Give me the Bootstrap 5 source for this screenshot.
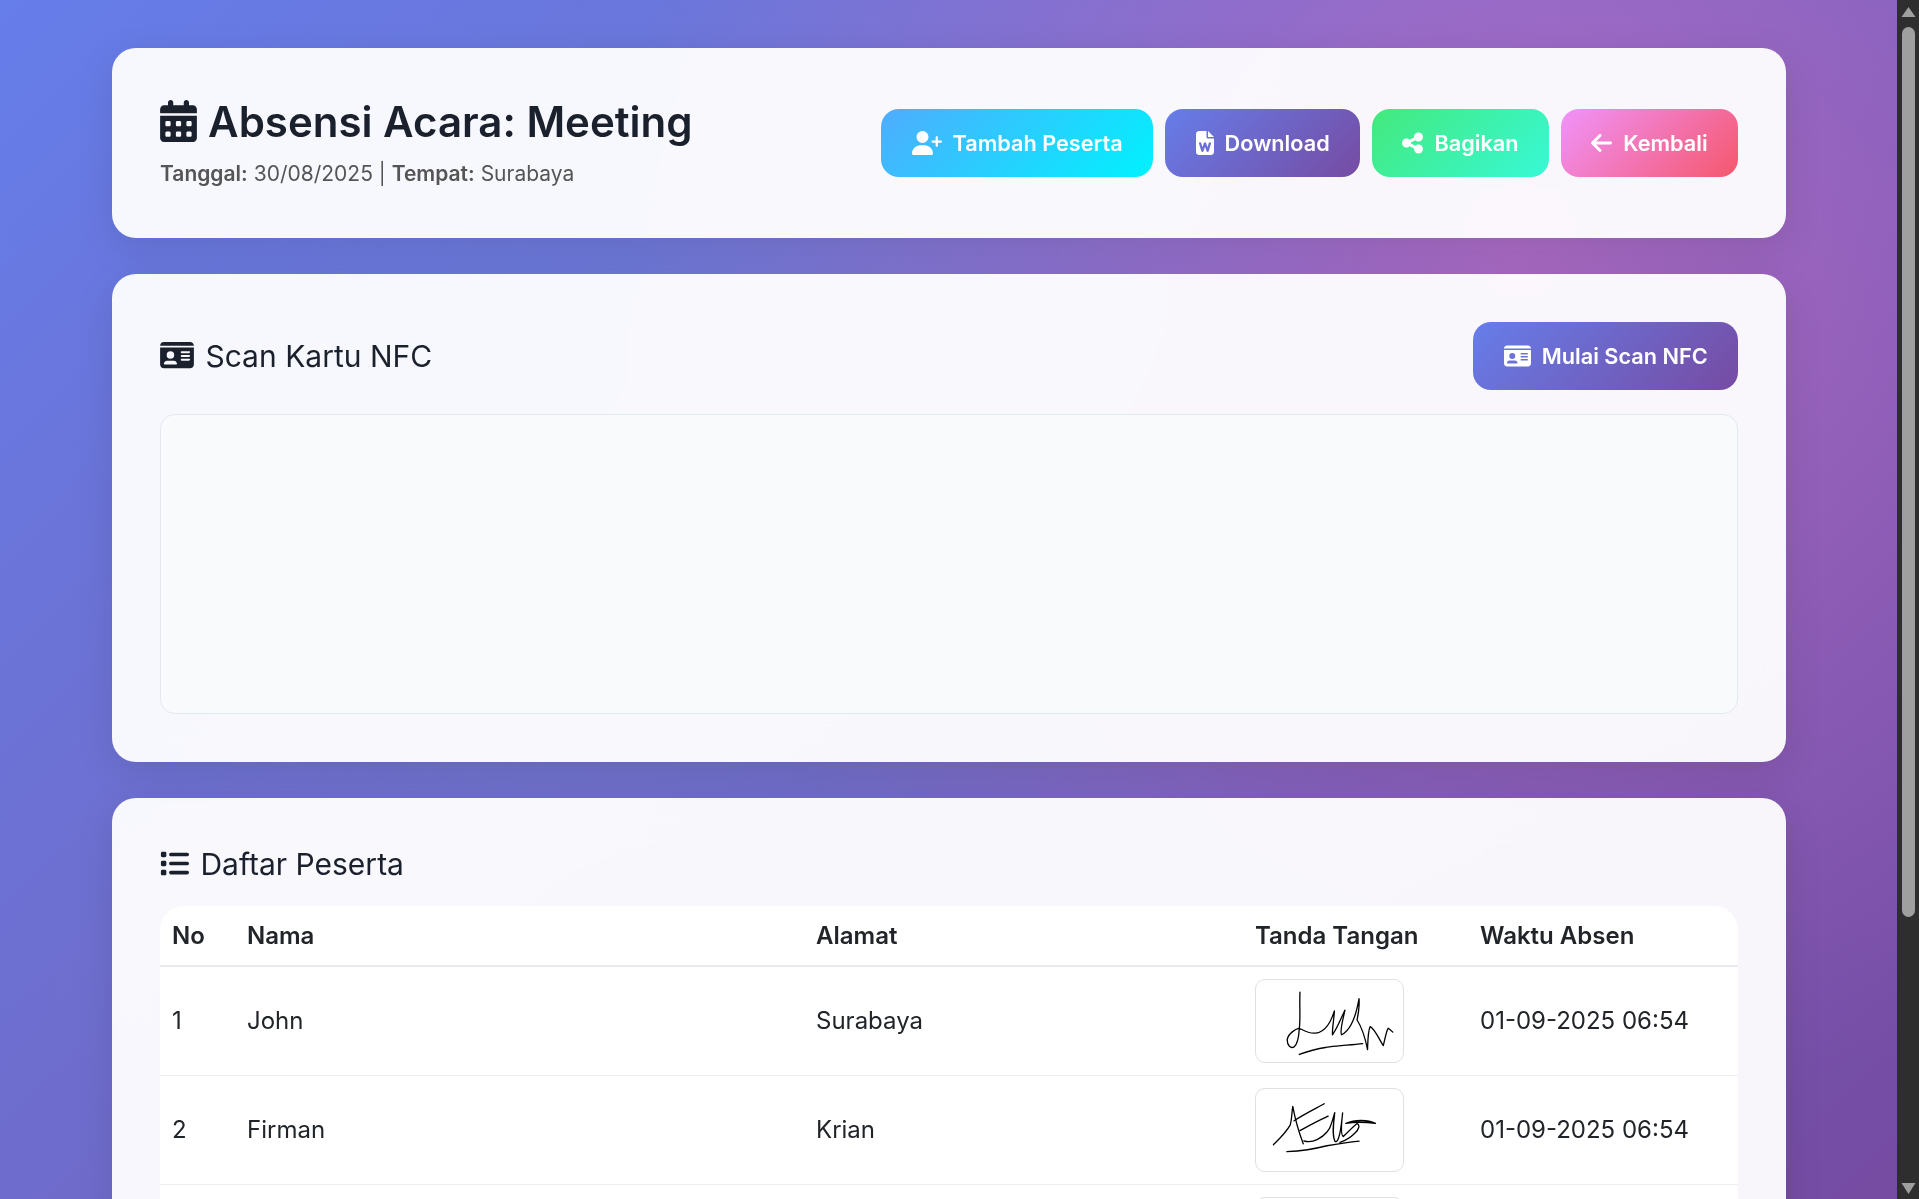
<!DOCTYPE html>
<html lang="id"><head><meta charset="utf-8"><title>Absensi Acara</title>
<link href="https://cdn.jsdelivr.net/npm/bootstrap@5.3.0/dist/css/bootstrap.min.css" rel="stylesheet">
<style>
html,body{height:100%;margin:0;overflow:hidden}
body{font-family:Inter,"Liberation Sans",sans-serif;color:#212529}
.app-shell{height:1199px}
.scroll-view{position:relative;flex:1 1 auto;min-width:0;overflow:hidden;background:linear-gradient(135deg,#667eea 0%,#764ba2 100%)}
.scroll-view::before{content:"";position:absolute;inset:0;background:radial-gradient(circle at 20% 80%,rgba(120,119,198,.3) 0%,transparent 50%),radial-gradient(circle at 80% 20%,rgba(255,119,198,.4) 0%,transparent 50%),radial-gradient(circle at 40% 40%,rgba(120,219,255,.12) 0%,transparent 50%)}
.page-wrap{position:relative;padding:48px 111px 0 112px}
.glass{background:rgba(255,255,255,.95);backdrop-filter:blur(20px);border-radius:24px;padding:48px;margin-bottom:36px;box-shadow:0 10px 38px rgba(0,0,0,.1)}
.head-card{height:190px;padding-top:40px;padding-bottom:40px}
.ttl{font-size:42px;font-weight:600;color:#1a202c;line-height:1.2;margin:0 0 11px}
.ttl svg{height:42px;width:37px;vertical-align:-5px;margin-right:.5px}
.subline{font-size:21px;color:#555;margin:0;line-height:1.5}
.subline b{font-weight:600}
.grad-btn{height:68px;border:0;border-radius:18px;color:#fff;font-weight:600;font-size:21.7px;padding:0 30.4px;display:inline-flex;align-items:center;gap:11px;white-space:nowrap}
.grad-btn:hover{color:#fff}
.g-blue{background:linear-gradient(135deg,#4facfe,#00f2fe)}
.g-purple{background:linear-gradient(135deg,#667eea,#764ba2)}
.g-green{background:linear-gradient(135deg,#43e97b,#38f9d7)}
.g-pink{background:linear-gradient(135deg,#f093fb,#f5576c)}
.grad-btn svg{fill:#fff;height:24px}
.btn-row{gap:12px}
.sec-ttl{font-size:30px;font-weight:400;color:#1a202c;margin:0;line-height:1.2}
.sec-ttl svg{fill:#1a202c;vertical-align:-3px;margin-right:3px}
.reader-box{height:300px;border:1px solid #e2e8f0;border-radius:15px;background:#f9fafc;margin-top:24px}
.tbl-wrap{background:#fff;border-radius:24px;overflow:hidden;margin-top:24px}
.att-table{table-layout:fixed;width:100%;margin:0;font-size:24px}
.att-table th{font-weight:600;padding:0 12px;height:60px;vertical-align:middle;border-bottom:2px solid #e9e9f0;font-size:24px}
.att-table td{padding:0 12px;height:109px;vertical-align:middle;border-bottom:1px solid #edeef3}
.sig-box{display:block;width:149px;height:84px;border:1px solid #dee0e4;border-radius:10px;background:#fff}
.sig-box path{fill:none;stroke:#000;stroke-width:4;stroke-linecap:round;stroke-linejoin:round}
.fake-scroll{flex:0 0 22px;background:#2e2e2e}
.fake-scroll svg{fill:#9f9f9f;display:block;flex:none}
.thumb-bar{width:13px;height:890px;background:#9f9f9f;border-radius:7px;margin:5px auto 0 auto}
</style></head>
<body>
<div class="app-shell d-flex">
<div class="scroll-view">
<div class="page-wrap">

<div class="glass head-card d-flex justify-content-between align-items-center">
<div>
<h1 class="ttl"><svg viewBox="0 0 448 512" fill="#1a202c"><path d="M128 0c17.7 0 32 14.3 32 32V64H288V32c0-17.7 14.3-32 32-32s32 14.3 32 32V64h48c26.5 0 48 21.5 48 48v48H0V112C0 85.5 21.5 64 48 64H96V32c0-17.7 14.3-32 32-32zM0 192H448V464c0 26.5-21.5 48-48 48H48c-26.5 0-48-21.5-48-48V192zm64 80v32c0 8.8 7.2 16 16 16h32c8.8 0 16-7.2 16-16V272c0-8.8-7.2-16-16-16H80c-8.8 0-16 7.2-16 16zm128 0v32c0 8.8 7.2 16 16 16h32c8.8 0 16-7.2 16-16V272c0-8.8-7.2-16-16-16H208c-8.8 0-16 7.2-16 16zm144-16c-8.8 0-16 7.2-16 16v32c0 8.8 7.2 16 16 16h32c8.8 0 16-7.2 16-16V272c0-8.8-7.2-16-16-16H336zM64 400v32c0 8.8 7.2 16 16 16h32c8.8 0 16-7.2 16-16V400c0-8.8-7.2-16-16-16H80c-8.8 0-16 7.2-16 16zm144-16c-8.8 0-16 7.2-16 16v32c0 8.8 7.2 16 16 16h32c8.8 0 16-7.2 16-16V400c0-8.8-7.2-16-16-16H208zm112 16v32c0 8.8 7.2 16 16 16h32c8.8 0 16-7.2 16-16V400c0-8.8-7.2-16-16-16H336c-8.8 0-16 7.2-16 16z"/></svg> Absensi Acara: Meeting</h1>
<p class="subline"><b>Tanggal:</b> 30/08/2025 | <b>Tempat:</b> Surabaya</p>
</div>
<div class="d-flex btn-row">
<a class="btn grad-btn g-blue"><svg viewBox="0 0 640 512"><path d="M96 128a128 128 0 1 1 256 0A128 128 0 1 1 96 128zM0 482.3C0 383.8 79.8 304 178.3 304h91.4C368.2 304 448 383.8 448 482.3c0 16.4-13.3 29.7-29.7 29.7H29.7C13.3 512 0 498.7 0 482.3zM504 312V248H440c-13.3 0-24-10.7-24-24s10.7-24 24-24h64V136c0-13.3 10.7-24 24-24s24 10.7 24 24v64h64c13.3 0 24 10.7 24 24s-10.7 24-24 24H552v64c0 13.3-10.7 24-24 24s-24-10.7-24-24z"/></svg>Tambah Peserta</a>
<a class="btn grad-btn g-purple"><svg viewBox="0 0 384 512"><path d="M64 0C28.7 0 0 28.7 0 64V448c0 35.3 28.7 64 64 64H320c35.3 0 64-28.7 64-64V160H256c-17.7 0-32-14.3-32-32V0H64zM256 0V128H384L256 0zM111 257.1l26.8 89.2 31.6-90.3c3.4-9.6 12.5-16.1 22.7-16.1s19.3 6.4 22.7 16.1l31.6 90.3L273 257.1c3.8-12.7 17.2-19.9 29.9-16.1s19.9 17.2 16.1 29.9l-48 160c-3 10-12 16.9-22.4 17.1s-19.8-6.2-23.2-16.1L192 336.6l-33.3 95.3c-3.4 9.8-12.8 16.3-23.2 16.1s-19.5-7.1-22.4-17.1l-48-160c-3.8-12.7 3.4-26.1 16.1-29.9s26.1 3.4 29.9 16.1z"/></svg>Download</a>
<a class="btn grad-btn g-green"><svg viewBox="0 0 448 512"><path d="M352 224c53 0 96-43 96-96s-43-96-96-96s-96 43-96 96c0 4 .2 8 .7 11.9l-94.1 47C145.4 170.2 121.9 160 96 160c-53 0-96 43-96 96s43 96 96 96c25.9 0 49.4-10.2 66.6-26.9l94.1 47c-.5 3.9-.7 7.8-.7 11.9c0 53 43 96 96 96s96-43 96-96s-43-96-96-96c-25.9 0-49.4 10.2-66.6 26.9l-94.1-47c.5-3.9 .7-7.8 .7-11.9s-.2-8-.7-11.9l94.1-47C302.6 213.8 326.1 224 352 224z"/></svg>Bagikan</a>
<a class="btn grad-btn g-pink"><svg viewBox="0 0 448 512"><path d="M9.4 233.4c-12.5 12.5-12.5 32.8 0 45.3l160 160c12.5 12.5 32.8 12.5 45.3 0s12.5-32.8 0-45.3L109.2 288 416 288c17.7 0 32-14.3 32-32s-14.3-32-32-32l-306.7 0L214.6 118.6c12.5-12.5 12.5-32.8 0-45.3s-32.8-12.5-45.3 0l-160 160z"/></svg>Kembali</a>
</div>
</div>

<div class="glass">
<div class="d-flex justify-content-between align-items-center">
<h2 class="sec-ttl"><svg width="34" height="30" viewBox="0 0 576 512"><path d="M0 96l576 0c0-35.3-28.7-64-64-64L64 32C28.7 32 0 60.7 0 96zm0 32V416c0 35.3 28.7 64 64 64H512c35.3 0 64-28.7 64-64V128H0zM64 405.3c0-29.5 23.9-53.3 53.3-53.3H234.7c29.5 0 53.3 23.9 53.3 53.3c0 5.9-4.8 10.7-10.7 10.7H74.7c-5.9 0-10.7-4.8-10.7-10.7zM176 192a64 64 0 1 1 0 128 64 64 0 1 1 0-128zm176 16c0-8.8 7.2-16 16-16H496c8.8 0 16 7.2 16 16s-7.2 16-16 16H368c-8.8 0-16-7.2-16-16zm0 64c0-8.8 7.2-16 16-16H496c8.8 0 16 7.2 16 16s-7.2 16-16 16H368c-8.8 0-16-7.2-16-16zm0 64c0-8.8 7.2-16 16-16H496c8.8 0 16 7.2 16 16s-7.2 16-16 16H368c-8.8 0-16-7.2-16-16z"/></svg> Scan Kartu NFC</h2>
<a class="btn grad-btn g-purple"><svg viewBox="0 0 576 512"><path d="M0 96l576 0c0-35.3-28.7-64-64-64L64 32C28.7 32 0 60.7 0 96zm0 32V416c0 35.3 28.7 64 64 64H512c35.3 0 64-28.7 64-64V128H0zM64 405.3c0-29.5 23.9-53.3 53.3-53.3H234.7c29.5 0 53.3 23.9 53.3 53.3c0 5.9-4.8 10.7-10.7 10.7H74.7c-5.9 0-10.7-4.8-10.7-10.7zM176 192a64 64 0 1 1 0 128 64 64 0 1 1 0-128zm176 16c0-8.8 7.2-16 16-16H496c8.8 0 16 7.2 16 16s-7.2 16-16 16H368c-8.8 0-16-7.2-16-16zm0 64c0-8.8 7.2-16 16-16H496c8.8 0 16 7.2 16 16s-7.2 16-16 16H368c-8.8 0-16-7.2-16-16zm0 64c0-8.8 7.2-16 16-16H496c8.8 0 16 7.2 16 16s-7.2 16-16 16H368c-8.8 0-16-7.2-16-16z"/></svg>Mulai Scan NFC</a>
</div>
<div class="reader-box"></div>
</div>

<div class="glass">
<h2 class="sec-ttl"><svg class="list-ico" width="29" height="29" viewBox="0 0 512 512"><path d="M40 48C26.7 48 16 58.7 16 72v48c0 13.3 10.7 24 24 24H88c13.3 0 24-10.7 24-24V72c0-13.3-10.7-24-24-24H40zM192 64c-17.7 0-32 14.3-32 32s14.3 32 32 32H480c17.7 0 32-14.3 32-32s-14.3-32-32-32H192zm0 160c-17.7 0-32 14.3-32 32s14.3 32 32 32H480c17.7 0 32-14.3 32-32s-14.3-32-32-32H192zm0 160c-17.7 0-32 14.3-32 32s14.3 32 32 32H480c17.7 0 32-14.3 32-32s-14.3-32-32-32H192zM16 232v48c0 13.3 10.7 24 24 24H88c13.3 0 24-10.7 24-24V232c0-13.3-10.7-24-24-24H40c-13.3 0-24 10.7-24 24zM40 368c-13.3 0-24 10.7-24 24v48c0 13.3 10.7 24 24 24H88c13.3 0 24-10.7 24-24V392c0-13.3-10.7-24-24-24H40z"/></svg> Daftar Peserta</h2>
<div class="tbl-wrap">
<table class="table att-table">
<colgroup><col style="width:75px"><col style="width:569px"><col style="width:439px"><col style="width:225px"><col></colgroup>
<thead><tr><th>No</th><th>Nama</th><th>Alamat</th><th>Tanda Tangan</th><th>Waktu Absen</th></tr></thead>
<tbody>
<tr><td>1</td><td>John</td><td>Surabaya</td><td><svg class="sig-box" viewBox="46 58 444 250"><path d="M178 95C176 130 180 175 176 205C165 208 142 220 139 240C139 258 150 268 160 262C172 252 175 225 176 205C190 212 205 222 225 220C250 218 268 200 283 152C282 175 276 205 277 225C292 205 305 170 315 150C310 175 298 215 305 225C325 215 345 190 358 115C360 145 355 165 352 180C365 200 378 240 384 270C385 240 385 215 392 200C405 205 420 240 432 258C438 235 442 210 447 205C452 208 456 212 461 217"/><path d="M176 285C210 272 240 266 268 262C300 258 335 256 369 252"/></svg></td><td>01-09-2025 06:54</td></tr>
<tr><td>2</td><td>Firman</td><td>Krian</td><td><svg class="sig-box" viewBox="46 385 444 250"><path d="M97 555C115 537 135 518 148 495C153 480 153 455 156 438C162 470 172 510 188 552"/><path d="M252 430C225 445 190 462 160 482"/><path d="M264 468C235 480 205 497 178 512"/><path d="M190 543C215 552 250 535 268 505C275 490 280 470 284 457C280 490 275 525 285 545C295 550 302 520 308 458C305 485 300 525 310 530C330 510 345 495 352 490C362 495 358 508 345 520C330 535 315 543 300 548M318 490C345 478 385 478 408 490C380 486 345 485 318 490"/><path d="M138 576C180 574 225 567 260 558C295 552 325 548 358 544"/></svg></td><td>01-09-2025 06:54</td></tr>
<tr><td></td><td></td><td></td><td><span class="sig-box"></span></td><td></td></tr>
</tbody>
</table>
</div>
</div>

</div>
</div>
<div class="fake-scroll d-flex flex-column">
<svg width="22" height="22" viewBox="0 0 22 22"><path d="M11.5 7l7 10h-14z"/></svg>
<div class="thumb-bar"></div>
<svg class="mt-auto" width="22" height="22" viewBox="0 0 22 22"><path d="M4.5 6h14l-7 11z"/></svg>
</div>
</div>
</body></html>
